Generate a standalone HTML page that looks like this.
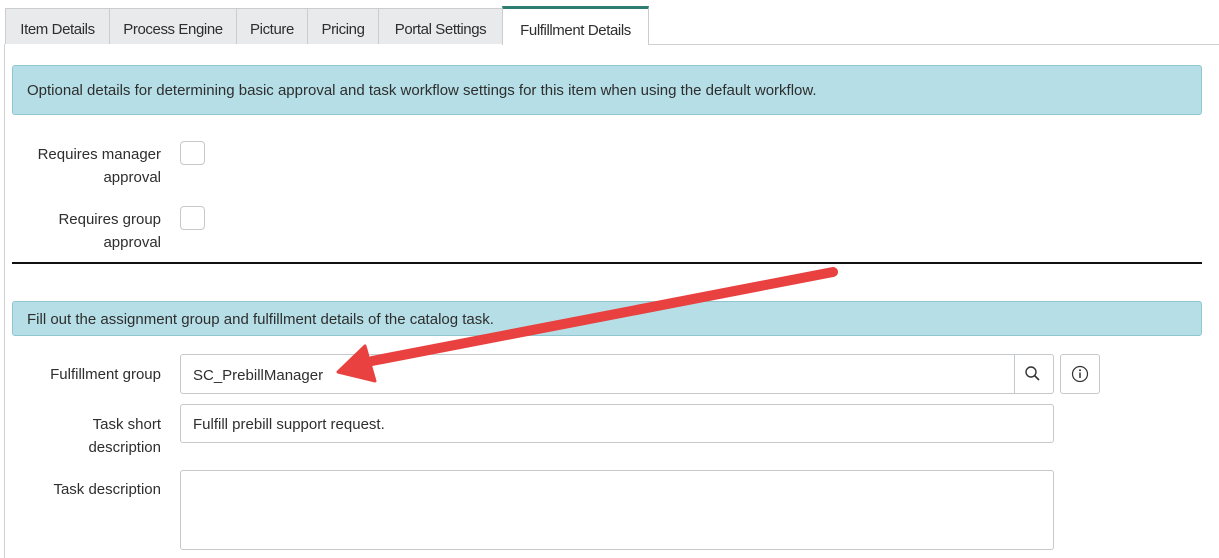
<!DOCTYPE html>
<html><head><style>
body{margin:0;width:1219px;height:558px;background:#fff;font-family:"Liberation Sans",sans-serif;font-size:15px;color:#2e2e2e;position:relative;overflow:hidden}
.a{position:absolute}
.tab{position:absolute;top:8px;height:36px;background:#e8eaec;border:1px solid #c9cdd0;border-bottom:none;box-sizing:border-box;line-height:42px;text-align:center;letter-spacing:-0.4px;font-size:15px}
.info{position:absolute;left:12px;width:1190px;background:#b5dee6;border:1px solid #8fc6d0;border-radius:3px;box-sizing:border-box;padding-left:14px}
.lbl{position:absolute;right:1058px;text-align:right;line-height:23px}
.cb{position:absolute;left:180px;width:25px;height:24px;border:1px solid #c5c9cc;border-radius:4px;box-sizing:border-box}
.inp{position:absolute;border:1px solid #c5c9cc;border-radius:3px;box-sizing:border-box;padding-left:12px}
</style></head><body>
<div class="a" style="left:648px;top:44px;width:571px;height:1px;background:#d0d3d6"></div>
<div class="a" style="left:4px;top:44px;width:1px;height:514px;background:#d0d3d6"></div>
<div class="tab" style="left:5px;width:105px">Item Details</div>
<div class="tab" style="left:109px;width:128px">Process Engine</div>
<div class="tab" style="left:236px;width:72px">Picture</div>
<div class="tab" style="left:307px;width:72px">Pricing</div>
<div class="tab" style="left:378px;width:125px">Portal Settings</div>
<div class="tab" style="left:502px;width:147px;top:6px;height:39px;background:#fff;border-top:3px solid #2e7d73;line-height:44px">Fulfillment Details</div>
<div class="info" style="top:65px;height:50px;line-height:50px">Optional details for determining basic approval and task workflow settings for this item when using the default workflow.</div>
<div class="lbl" style="top:143px">Requires manager<br>approval</div>
<div class="cb" style="top:141px"></div>
<div class="lbl" style="top:208px">Requires group<br>approval</div>
<div class="cb" style="top:206px"></div>
<div class="a" style="left:12px;top:262px;width:1190px;height:2px;background:#111"></div>
<div class="info" style="top:301px;height:35px;line-height:35px">Fill out the assignment group and fulfillment details of the catalog task.</div>
<div class="lbl" style="top:363px">Fulfillment group</div>
<div class="inp" style="left:180px;top:354px;width:874px;height:40px;line-height:41px">SC_PrebillManager</div>
<div class="a" style="left:1014px;top:354px;width:1px;height:40px;background:#c5c9cc"></div>
<svg class="a" style="left:1024px;top:365px" width="18" height="18" viewBox="0 0 18 18"><circle cx="7" cy="7" r="5" fill="none" stroke="#333" stroke-width="1.4"/><path d="M10.5 10.5L15 15" stroke="#333" stroke-width="1.6"/></svg>
<div class="inp" style="left:1060px;top:354px;width:40px;height:40px"></div>
<svg class="a" style="left:1071px;top:365px" width="18" height="18" viewBox="0 0 18 18"><circle cx="9" cy="9" r="7.5" fill="none" stroke="#333" stroke-width="1.2"/><circle cx="9" cy="5.3" r="1" fill="#333"/><path d="M9 7.5V13" stroke="#333" stroke-width="1.5"/></svg>
<div class="lbl" style="top:413px">Task short<br>description</div>
<div class="inp" style="left:180px;top:404px;width:874px;height:39px;line-height:40px">Fulfill prebill support request.</div>
<div class="lbl" style="top:478px">Task description</div>
<div class="inp" style="left:180px;top:470px;width:874px;height:80px"></div>
<svg class="a" style="left:0;top:0" width="1219" height="558"><path d="M833 272L372 361" stroke="#e8413f" stroke-width="10" stroke-linecap="round"/><path d="M338 372L365 346L375 381Z" fill="#e8413f" stroke="#e8413f" stroke-width="3" stroke-linejoin="round"/></svg>
</body></html>
